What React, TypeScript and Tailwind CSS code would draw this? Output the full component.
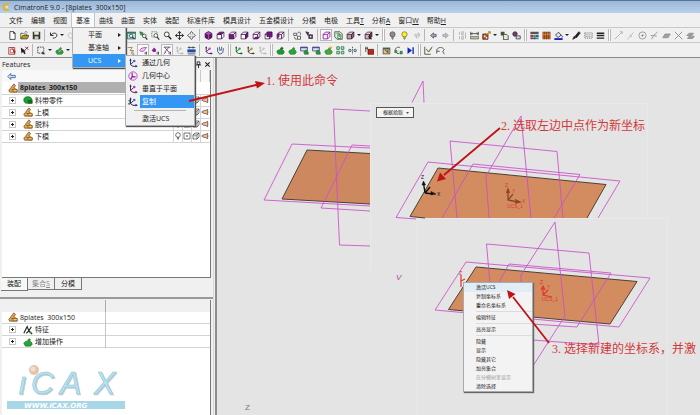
import React from 'react';

type Tool = { icon: string; label: string; pressed?: boolean } | 'sep' | 'grip' | 'caret';

const t = (icon: string, label: string, pressed = false): Tool => ({ icon, label, pressed });

const cube = (front: string, top: string, side: string) => (
  <>
    <path d="M1.5 4.5h6v6h-6z" fill={front} stroke="#3b1048" />
    <path d="M1.5 4.5l3-3h6l-3 3z" fill={top} stroke="#3b1048" />
    <path d="M7.5 4.5l3-3v6l-3 3z" fill={side} stroke="#3b1048" />
  </>
);

const plug = (color: string, extra?: React.ReactNode) => (
  <>
    <path d="M1 8c0-2 2-3 4-3l2-3 2 1-1 2c2 0 3 2 3 4l-2 2H3z" fill={color} stroke="#0b5a12" strokeWidth=".6" />
    {extra}
  </>
);

const axes = (a: string, b: string) => (
  <>
    <path d="M3 1v7l3 2h5M3 8l4-4" fill="none" stroke={a} strokeWidth="1.2" />
    <path d="M1.5 3L3 .5 4.500 3zM9 8l2.500 2L9 11.500z" fill={a} />
    <circle cx="7.500" cy="3.500" r="1.500" fill={b} />
  </>
);

const bulb = (fill: string, stroke: string) => (
  <>
    <circle cx="6" cy="4.500" r="3.500" fill={fill} stroke={stroke} />
    <path d="M4.500 8.500h3M4.500 10h3M5.500 11.300h1" stroke={stroke} />
  </>
);

const GLYPHS: Record<string, React.ReactNode> = {
  new: <path d="M2.500.8h5l2 2v8.400h-7zM7.300.8v2.400h2.200" fill="#fff" stroke="#222" />,
  open: (
    <>
      <path d="M1 10V3h3l1 1h4v2" fill="#fdf3a0" stroke="#444" />
      <path d="M1 10.500L3.500 6H12l-2.500 4.500z" fill="#b79b1e" stroke="#444" />
      <path d="M6 2c1-2 3-1 4 0" fill="none" stroke="#333" strokeWidth=".8" />
    </>
  ),
  save: (
    <>
      <path d="M1 1h10v10H1z" fill="#35392c" />
      <path d="M3 1h6v4H3z" fill="#e8e8dc" />
      <path d="M3.500 7h5v4h-5z" fill="#c9c9b8" />
    </>
  ),
  undo: <path d="M2 2v4h4M2.500 5.500c3-4 8-3 8 0 0 3-3 4-5 4H5" fill="none" stroke="#222" strokeWidth="1.200" />,
  redo: <path d="M10 2v4H6M9.500 5.500c-3-4-8-3-8 0 0 3 3 4 5 4" fill="none" stroke="#bbb" strokeWidth="1.200" />,
  zoomWindow: (
    <>
      <path d="M.5 1.500h11v9H.5z" fill="#bfe0d5" stroke="#1d5a52" />
      <path d="M.5 1.500h11v2H.5z" fill="#2b6f68" />
      <circle cx="5.500" cy="6.500" r="2.200" fill="#fff" stroke="#143c38" />
      <path d="M7 8l3 2.500" stroke="#143c38" strokeWidth="1.500" />
    </>
  ),
  zoomGreen: (
    <>
      <path d="M1 1l4 1 1 4-4-1z" fill="#3aa648" stroke="#145a20" strokeWidth=".7" />
      <circle cx="7" cy="6.500" r="2.500" fill="#e7f3e7" stroke="#333" />
      <path d="M8.500 8.500L11 11.500" stroke="#222" strokeWidth="1.500" />
    </>
  ),
  zoomBox: (
    <>
      <path d="M1 1h7v7H1z" fill="none" stroke="#2f7a39" strokeDasharray="1.500 1" />
      <circle cx="6.500" cy="6" r="2.500" fill="#fff" stroke="#333" />
      <path d="M8 8l3 3.500" stroke="#222" strokeWidth="1.500" />
    </>
  ),
  magnifier: (
    <>
      <circle cx="5" cy="4.500" r="3.200" fill="#f8f8f8" stroke="#333" strokeWidth="1.200" />
      <path d="M7.300 7L11 11" stroke="#222" strokeWidth="1.800" />
    </>
  ),
  move: <path d="M6 1v10M1 6h10M4 3l2-2.500L8 3M4 9l2 2.500L8 9M3 4L.5 6 3 8M9 4l2.500 2L9 8" fill="none" stroke="#222" strokeWidth="1.200" />,
  rotate: <path d="M4 3l2-2.300L8 3 7 4.500M4 9l2 2.300L8 9 7 7.500M3 4L.7 6 3 8l1.500-1M9 4l2.300 2L9 8 7.500 7M5 4.500L4 3M5 7.500L4 9" fill="none" stroke="#333" />,
  solid: (
    <>
      <path d="M6 .8l4.500 2.400v5.500L6 11.200 1.500 8.700V3.200z" fill="#6a0f72" stroke="#3b1048" />
      <path d="M2 3.400l4 2 4-2-4-2z" fill="#a85cae" />
      <path d="M6 5.500v5.300" stroke="#d9b8dc" strokeWidth=".6" />
    </>
  ),
  cubeTop: cube('#fff', '#7c1184', '#fff'),
  cubeFront: cube('#7c1184', '#fff', '#e9d2eb'),
  cubeSide: cube('#fff', '#fff', '#7c1184'),
  cubeBottom: (
    <>
      {cube('#fff', '#fff', '#f0e0f2')}
      <path d="M1.500 10.500l3-3h6l-3 3z" fill="#7c1184" />
    </>
  ),
  cubeBack: (
    <>
      {cube('#fff', '#fff', '#fff')}
      <path d="M4 1.500h6.500v6H4z" fill="#7c1184" stroke="#3b1048" />
    </>
  ),
  cubeWire: (
    <>
      {cube('#fff', '#fff', '#fff')}
      <path d="M1.500 4.500l3-3v6l-3 3z" fill="#7c1184" />
    </>
  ),
  cubePink: (
    <path d="M1.500 4.500h6v6h-6zM1.500 4.500l3-3h6l-3 3M10.500 1.500v6l-3 3" fill="#fbeffb" stroke="#8d1796" strokeWidth="1.100" />
  ),
  orbit: (
    <>
      <path d="M1 3h4v3H1zM6 7h4v4H6z" fill="#fff" stroke="#333" />
      <path d="M6 3c2-3 5-1 4 2M2 8c0 2 1 3 3 3" fill="none" stroke="#333" />
    </>
  ),
  transform: (
    <>
      <path d="M1 1l4 1-1 4zM5 5h5v5H5z" fill="#5a2a62" stroke="#222" strokeWidth=".8" />
      <path d="M6.500 6.500h2v2h-2z" fill="#fff" />
    </>
  ),
  boxGreen: (
    <>
      <path d="M1 1h7l3 3v7H4L1 8z" fill="#dfeadf" stroke="#234d2a" />
      <path d="M3 3h4v5M5 5v5h4V5z" fill="none" stroke="#2c7a3a" />
    </>
  ),
  shaded: cube('#b5a68d', '#ece5d8', '#857456'),
  shadedDark: (
    <>
      {cube('#c9b9a5', '#efe6dc', '#6c3d22')}
      <path d="M6 7l4 4" stroke="#222" strokeWidth="1.500" />
    </>
  ),
  bulbGray: bulb('#8c8c8c', '#5a5a5a'),
  bulbYellow: bulb('#fbef30', '#7c7320'),
  bulbsFaded: (
    <path d="M3 6a2 2 0 1 1 3 2v2M7 3a2 2 0 1 1 2 4v2" fill="#d0d0d0" stroke="#b2b2b2" />
  ),
  prev: <path d="M2 6l4-3.500v2h3.500v3H6v2z" fill="#a9a9b3" stroke="#4a4a60" />,
  next: <path d="M10 6L6 2.500v2H2.500v3H6v2z" fill="#b8b8b8" stroke="#a4a4a4" />,
  digits: <path d="M2 1v4M5 1h2v4H5zM2 7v4M5 7h2v4H5zM10 2v8" fill="none" stroke="#a5a5a5" />,
  measure: (
    <>
      <path d="M1 1v5M11 1v5M1 3.500h10M3 2L1.500 3.500 3 5M9 2l1.500 1.500L9 5" fill="none" stroke="#333" />
      <path d="M.5 7.500h11v3H.5z" fill="#c4cbb0" stroke="#555f45" />
    </>
  ),
  analyze: (
    <>
      <path d="M1 4h7v7H1z" fill="#b5532b" stroke="#4c2212" />
      <path d="M2.500 6h2v2h-2zM5 8h2v2H5z" fill="#fff" />
      <path d="M6 5l5-4M8 1h3v3" stroke="#b99222" strokeWidth="1.400" fill="none" />
    </>
  ),
  copyPart: (
    <>
      <path d="M1 1h5v5H1z" fill="#3b5a3a" />
      <path d="M4.500 4.500H9l2 2v5H4.500z" fill="#e6e6d8" stroke="#333" />
    </>
  ),
  linkPart: (
    <>
      <circle cx="4" cy="4" r="3" fill="#7b3a6d" stroke="#333" />
      <path d="M5.500 6.500h5.500v4H5.500z" fill="#dcdcdc" stroke="#333" />
    </>
  ),
  palette: (
    <>
      <path d="M.5 1h11v3H.5z" fill="#555" />
      <path d="M.5 5h3.500v3H.5z" fill="#c22a33" />
      <path d="M4.300 5h3.500v3H4.300z" fill="#2f9a45" />
      <path d="M8 5h3.500v3H8z" fill="#3159ba" />
      <path d="M.5 8.500h3.500v2.500H.5z" fill="#892c9a" />
      <path d="M4.300 8.500h3.500v2.500H4.300z" fill="#444" />
      <path d="M8 8.500h3.500v2.500H8z" fill="#23a2a2" />
    </>
  ),
  texture: (
    <>
      <path d="M.5 1h11v10H.5z" fill="#b9662f" />
      <path d="M3 1v10M6 1v10M9 1v10" stroke="#6b3313" />
      <path d="M1 4c3 2 6-1 10 1" fill="none" stroke="#d9a066" />
    </>
  ),
  fill: (
    <>
      <path d="M2 5.500L6 1.500l3.500 4-4 3.200z" fill="#dfe6ee" stroke="#222" />
      <path d="M9.500 5.500c2 1 2 3 1 3" stroke="#1c36b8" strokeWidth="1.300" fill="none" />
      <path d="M.5 9.500h11V12H.5z" fill="#1723c0" />
    </>
  ),
  brush: <path d="M1 11l2-4 2 2zM4 7l5-6 2 1.500L6 9z" fill="#222" stroke="#222" />,
  dotted: <path d="M1 2.500h10v7H1zM2 5h8M2 7.500h8" fill="none" stroke="#666" strokeDasharray="1.500 1" />,
  lines: <path d="M1 3h10M1 6h10M1 9.500h10" stroke="#222" strokeWidth="1.800" />,
  gLine: <path d="M1 11L10 2M8 1h3v3" fill="none" stroke="#a0a0a0" />,
  gLineMid: <path d="M2 11L10 2M5 5l3 3" fill="none" stroke="#a8a8a8" />,
  gCircle: (
    <>
      <circle cx="6" cy="6" r="4.800" fill="none" stroke="#8a8a8a" />
      <circle cx="6" cy="6" r="1.300" fill="#777" />
    </>
  ),
  gAngle: <path d="M1 6h4l5-5M5 6l-3 5M5 6l4 1" fill="none" stroke="#999" strokeWidth="1.300" />,
  gPlane: <path d="M1 9l3-5h7L8 9z" fill="#a0a0a0" stroke="#8a8a8a" />,
  gCross: <path d="M1 1l10 10M11 1L1 11" stroke="#8a8a8a" strokeWidth="1.200" />,
  gPlanes: <path d="M1 6l3-3h6L8 6zM2 10l2-3h7l-2 3z" fill="#a0a0a0" stroke="#8a8a8a" />,
  pickBox: (
    <>
      <path d="M1 2h8v9H1z" fill="#fff" stroke="#8c1d1d" />
      <path d="M3 4h5v5H3z" fill="none" stroke="#c43232" />
      <path d="M5 3l5 5-2 .5 1 2.500" fill="#b32020" stroke="#7c1111" strokeWidth=".6" />
    </>
  ),
  pickClear: (
    <>
      <path d="M1 2l1 8 2-2 2 3 1.500-1L6 7h2z" fill="#222" />
      <path d="M7 1l4 4M11 1L7 5" stroke="#a31f1f" strokeWidth="1.300" />
    </>
  ),
  selectBox: (
    <>
      <path d="M1 1.500h8v8H1z" fill="none" stroke="#222" strokeDasharray="2 1" />
      <path d="M7 7l4 4H7z" fill="#222" />
    </>
  ),
  plug: plug('#25a53a'),
  plugMini: plug('#3c9a44', <path d="M5 8l5-5" stroke="#fff" strokeWidth=".8" />),
  plugYellow: plug('#45a83a', <path d="M6 1h5v2H7z" fill="#d8b52d" />),
  plugTall: plug('#1f9732', <path d="M8 1v4M6 3h4" stroke="#115b1c" />),
  dialogGreen: (
    <>
      <path d="M.8 1.500h9v5h-9z" fill="#dbe7f5" stroke="#352a76" />
      <path d="M.8 1.500h9v1.500h-9z" fill="#4a3ca0" />
      <path d="M5 8l3-3 3 3v3H6z" fill="#27983a" stroke="#14521e" strokeWidth=".6" />
    </>
  ),
  grid4: (
    <path d="M1 1h3.500v3.500H1zM7 1h3.500v3.500H7zM1 7h3.500v3.500H1zM7 7h3.500v3.500H7z" fill="#b9e2c2" stroke="#1e6d42" />
  ),
  mirror: (
    <>
      <path d="M6 1v10" stroke="#333" strokeDasharray="2 1" />
      <circle cx="2.500" cy="6" r="1.700" fill="#a7cbd6" stroke="#1f5466" />
      <circle cx="9.500" cy="6" r="1.700" fill="#a7cbd6" stroke="#1f5466" />
    </>
  ),
  deletePart: (
    <>
      <path d="M1 1v7M0 3h4M3 1v4" stroke="#333" />
      <path d="M4 4.500h7.500v6.500H4z" fill="#bf2718" stroke="#5f130b" />
    </>
  ),
  boxOpen: (
    <>
      <path d="M1 2h10v2H1z" fill="#2f7d82" />
      <path d="M1.500 4h9v6.500h-9z" fill="#e7c08e" stroke="#5b3a1a" />
      <path d="M4 5l4 4M8 5v4" stroke="#286c3a" strokeWidth="1.400" />
    </>
  ),
  swap: (
    <>
      <path d="M1.500 6c0-4 4-5 6.500-4M4 10h3" stroke="#333" fill="none" />
      <path d="M1 6h3v3H1zM8 7h3v3.500H8z" fill="#3ba552" stroke="#19592a" strokeWidth=".7" />
    </>
  ),
  playEnd: (
    <>
      <path d="M2 1.500L8 6l-6 4.500z" fill="#1029c4" />
      <path d="M9.500 1.500v9" stroke="#1029c4" strokeWidth="1.800" />
    </>
  ),
  sketch: (
    <>
      <path d="M1 1v10h8M3 4l3 4 5-7" fill="none" stroke="#333" />
      <path d="M6 8l4-5" stroke="#9b7b3b" strokeWidth="1.500" />
    </>
  ),
  curve: <path d="M1 10V5c2-4 8-4 10 0l-2 2 2 4M1 7h4" fill="none" stroke="#444" strokeWidth="1.100" />,
  axesGreen: axes('#175e2a', '#2ca043'),
  axesBrown: axes('#4f3b22', '#b68a3a'),
  axesFaded: axes('#b5b5b5', '#c2c2c2'),
  axesPurple: axes('#5a2462', '#a13fb0'),
  axesBlue: axes('#24377d', '#4667b8'),
  axesCopy: (
    <>
      {axes('#24305d', '#4667b8')}
      <path d="M.5 4.500h2v2l-2 2h2" fill="none" stroke="#222" />
    </>
  ),
  letterA: <path d="M1 2h6l-3 4h5M8 11c-3 0-3-4 0-4v4h2" fill="none" stroke="#8b7a30" />,
  pinkNode: (
    <>
      <path d="M1 6c1-3 4-4 9-4l-4 5H2z" fill="#f4cdf6" stroke="#9d2da8" />
      <path d="M10 11c-3 0-3-3 0-3v3" fill="none" stroke="#333" />
    </>
  ),
  purpleDrop: (
    <>
      <path d="M1 6l3-4 3 3-1 3H3z" fill="#8c2196" />
      <path d="M10 11c-3 0-3-3 0-3v3" fill="none" stroke="#333" />
    </>
  ),
  dimension: <path d="M1 1.500h9M2 1.500l6 7M2 8.500l6-7M1 11l3-3M10 11c-3 0-3-3 0-3v3" fill="none" stroke="#4c2e58" />,
  blueBar: (
    <>
      <path d="M.5 4.500h11v4H.5z" fill="#1e48b8" />
      <path d="M1 2h10M3 .5v3M8 .5v3M1 10.500h10" fill="none" stroke="#333" />
    </>
  ),
  hand: (
    <>
      <path d="M2 2v5l3 4 4-2 1-6M4.500 1v5M7.500 1v5" fill="none" stroke="#4d5878" strokeWidth="1.200" />
      <circle cx="6" cy="5" r="1.500" fill="#7b93cf" />
    </>
  ),
  assembly: (
    <>
      <path d="M1 9l6-8 2 2-2 3 4 2v3H2z" fill="#e3a351" stroke="#6a3d10" strokeWidth=".8" />
      <path d="M4 7.500l4 1" stroke="#6a3d10" strokeWidth=".8" />
      <path d="M6 8h5v2.500H6z" fill="#f5dc7a" stroke="#6a3d10" strokeWidth=".7" />
    </>
  ),
  strip: (
    <>
      <path d="M1 6c0-3 2-4 5-4s5 2 5 5v3H5C2 10 1 8 1 6z" fill="#18a12c" stroke="#0c5c18" strokeWidth=".8" />
      <path d="M6 6h5v4H6z" fill="#0d6a1d" />
    </>
  ),
  feature: (
    <>
      <path d="M1 10l4-8 2 5 3-5M4 10l3-3 4 4" fill="none" stroke="#222" strokeWidth="1.300" />
      <circle cx="9" cy="9" r="1.300" fill="#2f8a3b" />
    </>
  ),
  circleAxis: (
    <>
      <circle cx="6" cy="6" r="5" fill="#fbeafc" stroke="#b33bc0" />
      <path d="M5 2v5h4M5 7l-2 3" stroke="#6b1d86" strokeWidth="1.300" fill="none" />
    </>
  ),
  point: (
    <>
      <path d="M1.500 1.500h9v9h-9z" fill="#fff" stroke="#333" />
      <path d="M5 5h2v2H5z" fill="#333" />
    </>
  ),
  wire: <path d="M1.500 4.500h6v6h-6zM1.500 4.500l3-3h6l-3 3M10.500 1.500v6l-3 3M4 7h1" fill="#fff" stroke="#333" />,
  speaker: <path d="M1 6l3-2h2l4-2v8L6 8H4zM10 6h1" fill="#e8c2a8" stroke="#5a2f18" />,
  smallBulb: bulb('#fff', '#333'),
  back: <path d="M1 6l4-4v2.500h6v3H5V10z" fill="#cfe3f7" stroke="#1b5590" />,
};

const Glyph = ({ name, className = 'size-2.5' }: { name: string; className?: string }) => (
  <svg viewBox="0 0 12 12" className={`${className} shrink-0`} aria-hidden="true">
    {GLYPHS[name]}
  </svg>
);

const MENUS: [string, string?][] = [
  ['文件'], ['编辑'], ['视图'], ['基准'], ['曲线'], ['曲面'], ['实体'], ['装配'], ['标准件库'], ['模具设计'],
  ['五金模设计'], ['分模'], ['电极'], ['工具', 'T'], ['分析', 'A'], ['窗口', 'W'], ['帮助', 'H'],
];

const STANDARD_TOOLS: Tool[] = [
  t('new', '新建'), t('open', '打开'), t('save', '保存'), 'sep',
  t('undo', '撤销'), 'caret', t('redo', '重做'), 'caret', 'grip',
  t('zoomBox', '缩放'), t('zoomGreen', '缩放选择'), t('magnifier', '缩放'),
  t('zoomWindow', '窗口缩放'), t('zoomGreen', '缩放至所选'), t('zoomBox', '框选缩放'), t('magnifier', '动态缩放'), t('move', '平移'), t('rotate', '旋转'), 'sep',
  t('solid', '等轴测'), t('cubeTop', '俯视'), t('cubeFront', '前视'), t('cubeSide', '右视'), t('cubeBottom', '仰视'), t('cubeBack', '后视'), t('cubeWire', '左视'), 'sep',
  t('orbit', '旋转视图'), t('transform', '转换视图'), 'sep',
  t('cubePink', '线框', true), t('boxGreen', '隐藏线'), t('shaded', '着色'), 'caret', t('shadedDark', '渲染'), 'caret', 'grip',
  t('bulbGray', '隐藏'), t('bulbYellow', '显示'), t('bulbsFaded', '切换显示'), 'sep',
  t('prev', '上一个'), t('next', '下一个'), 'sep',
  t('digits', '编号'), t('measure', '测量'), t('analyze', '分析'), 'caret', t('copyPart', '复制零件'), t('linkPart', '链接零件'), 'grip',
  t('palette', '调色板'), t('texture', '纹理'), t('fill', '填充'), 'caret', t('brush', '格式刷'), t('dotted', '线型'), t('lines', '线宽'), 'grip',
  t('gLine', '直线'), t('gLineMid', '中点'), t('gCircle', '圆心'), t('gAngle', '角度'), t('gPlane', '平面'), t('gCross', '交点'), t('gPlanes', '平行面'),
];

const PART_TOOLS: Tool[] = [
  t('pickBox', '选择'), t('pickClear', '取消选择'), 'sep',
  t('selectBox', '框选'), 'caret', t('plugMini', '过滤'), 'caret', 'grip',
  t('axesBlue', '坐标系'), t('axesGreen', '坐标'), t('axesBrown', '轴'), t('axesPurple', '平面'),
  t('letterA', '注释'), t('pinkNode', '草图点', true), t('purpleDrop', '曲线点'), t('dimension', '尺寸', true), t('axesFaded', '约束'), t('blueBar', '标尺'), 'sep',
  t('axesPurple', '基准'), t('hand', '拖动'), 'grip',
  t('axesGreen', '放置'), t('axesBrown', '定位'), t('axesFaded', '固定'), 'grip',
  t('plugTall', '添加零件'), t('plug', '连接零件'), t('dialogGreen', '新零件'), t('dialogGreen', '新组件'), t('plugYellow', '编辑零件'), t('grid4', '阵列'), t('mirror', '镜像'), 'sep',
  t('deletePart', '删除零件'), 'sep',
  t('boxOpen', '打开零件'), t('swap', '替换'), t('playEnd', '激活'), 'grip',
  t('sketch', '草图'), t('curve', '曲线'),
];

const Toolbar = ({ tools, label }: { tools: Tool[]; label: string }) => (
  <div role="toolbar" aria-label={label} className="flex h-[15px] items-center overflow-hidden border-t border-[#c9c9c9] pl-1.5">
    {tools.map((tool, i) => {
      if (tool === 'sep') return <span key={i} className="mr-0.5 ml-0.5 h-3 w-px shrink-0 bg-[#b5b5b5]" />;
      if (tool === 'grip') return <span key={i} className="mr-px ml-0.5 h-3 w-[3px] shrink-0 border-x border-[#b9b9b9] bg-white" />;
      if (tool === 'caret') {
        return (
          <span key={i} className="flex w-1.5 shrink-0 justify-center">
            <svg viewBox="0 0 4 2" className="h-0.5 w-1"><path d="M0 0h4L2 2z" fill="#222" /></svg>
          </span>
        );
      }
      return (
        <button
          key={i}
          type="button"
          aria-label={tool.label}
          className={tool.pressed
            ? 'flex h-3 w-3 shrink-0 items-center justify-center border border-[#b8b8b8] bg-[#fafafa]'
            : 'flex h-3 w-3 shrink-0 items-center justify-center'}
        >
          <Glyph name={tool.icon} className="size-[9px]" />
        </button>
      );
    })}
  </div>
);

const UCS_ITEMS = [
  { icon: 'axesBlue', text: '通过几何' },
  { icon: 'circleAxis', text: '几何中心' },
  { icon: 'axesPurple', text: '垂直于平面' },
  { icon: 'axesCopy', text: '复制', active: true },
];

const DatumMenu = () => (
  <div className="absolute top-full left-0 z-20 w-[54px] border border-[#b0b0b0] bg-[#f1f1f1] shadow-[1px_1px_1px_#555]">
    {['平面', '基准轴', 'UCS'].map((text) => (
      <button
        key={text}
        type="button"
        className={text === 'UCS'
          ? 'flex h-[13px] w-full items-center bg-[#3397f3] pr-1 pl-[15px] text-white'
          : 'flex h-[13px] w-full items-center pr-1 pl-[15px]'}
      >
        <span className="flex-1 text-left">{text}</span>
        <svg viewBox="0 0 3 4" className="h-1 w-[3px]"><path d="M0 0v4l3-2z" fill="currentColor" /></svg>
      </button>
    ))}
    <div className="absolute top-[27px] left-[52px] w-[70px] border border-[#b0b0b0] bg-[#f1f1f1] shadow-[1px_1px_1px_#555]">
      {UCS_ITEMS.map(({ icon, text, active }) => (
        <button
          key={text}
          type="button"
          className="flex h-[13px] w-full items-center pl-0.5"
        >
          <Glyph name={icon} />
          <span className={active
            ? 'ml-0.5 flex h-full flex-1 items-center bg-[#3397f3] pl-0.5 text-white'
            : 'ml-0.5 flex h-full flex-1 items-center pl-0.5'}
          >
            {text}
          </span>
        </button>
      ))}
      <hr className="mt-0.5 mr-2 ml-2 border-[#b5b5b5]" />
      <button type="button" className="flex h-3.5 w-full items-center pl-4">激活UCS</button>
    </div>
  </div>
);

const MenuBar = () => (
  <nav className="flex h-3.5 shrink-0 items-center pl-[5px]">
    {MENUS.map(([text, key]) => (
      <div key={text} className={text === '基准' ? 'relative h-full border-x border-[#c4c4c4] bg-[#fafafa]' : 'h-full'}>
        <button type="button" className="h-full px-1 whitespace-nowrap">
          {text}{key && <u>{key}</u>}
        </button>
        {text === '基准' && <DatumMenu />}
      </div>
    ))}
  </nav>
);

const Expander = () => (
  <button type="button" aria-label="展开" className="flex size-[7px] items-center justify-center border border-[#c8c8c8] bg-white">
    <svg viewBox="0 0 5 5" className="size-[5px]"><path d="M1 2.500h3M2.500 1v3" stroke="#222" /></svg>
  </button>
);

const PARTS = [
  { icon: 'strip', name: '料带零件' },
  { icon: 'assembly', name: '上模' },
  { icon: 'assembly', name: '脱料' },
  { icon: 'assembly', name: '下模' },
];

const FeatureTree = () => (
  <div className="mx-0.5 min-h-0 flex-[208] overflow-hidden border-r border-b border-[#777] bg-white">
    <table className="w-full table-fixed border-collapse">
      <colgroup>
        <col />
        <col className="w-[9px]" />
        <col className="w-[9px]" />
        <col className="w-[9px]" />
        <col className="w-[9px]" />
      </colgroup>
      <thead>
        <tr className="h-3 bg-[#f8f8f8]">
          <th className="border-r border-[#c9c9c9] p-0 pl-[5px]"><Glyph name="back" className="size-[9px]" /></th>
          {[1, 2, 3, 4].map((n) => <th key={n} className="border-r border-[#c9c9c9] p-0" />)}
        </tr>
      </thead>
      <tbody>
        <tr className="h-3 border-b border-[#d4d4d4]">
          <td className="p-0">
            <div className="flex items-center pl-1.5">
              <Glyph name="assembly" />
              <span className="h-[11px] flex-1 bg-[#b0b0b0] pl-0.5 leading-[11px] font-bold whitespace-pre">8plates  300x150</span>
            </div>
          </td>
          <td colSpan={4} className="border-l border-[#d4d4d4] p-0" />
        </tr>
        {PARTS.map(({ icon, name }) => (
          <tr key={name} className="h-3 border-b border-[#d4d4d4]">
            <td className="p-0">
              <div className="flex items-center pl-[7px]">
                <Expander />
                <Glyph name={icon} className="mr-0.5 ml-[7px] size-2.5" />
                <span>{name}</span>
              </div>
            </td>
            {['smallBulb', 'point', 'wire', 'speaker'].map((g) => (
              <td key={g} className="border-l border-[#d4d4d4] p-0"><Glyph name={g} className="size-2" /></td>
            ))}
          </tr>
        ))}
      </tbody>
    </table>
  </div>
);

const Watermark = () => (
  <svg viewBox="0 0 122 46" className="mt-[17px] ml-1 h-[46px] w-[122px]">
    <g fontFamily="Liberation Sans, sans-serif" fontStyle="italic" fill="#b5e0ef" stroke="#93c3d8" strokeWidth=".5" fontSize="32" className="drop-shadow-[1px_1px_0_#c4cdd0]">
      <text x="12" y="29">ı</text>
      <text x="25" y="29">C</text>
      <text x="54" y="29">A</text>
      <text x="88" y="29">X</text>
    </g>
    <circle cx="28" cy="5" r="5" fill="#e5c3a8" />
    <circle cx="27" cy="4" r="2.500" fill="#f4dfcc" />
    <path d="M1 36h118v8H1z" fill="#a7d6e7" />
    <text x="18" y="43" fontFamily="DejaVu Sans, sans-serif" fontStyle="italic" fontSize="7" fontWeight="bold" fill="#fff">WWW.iCAX.ORG</text>
  </svg>
);

const PartTree = () => (
  <div className="mx-0.5 mt-px min-h-0 flex-[116] overflow-hidden border-r border-[#777] bg-white">
    <table className="w-full table-fixed border-collapse">
      <colgroup>
        <col className="w-[103px]" />
        <col />
      </colgroup>
      <thead>
        <tr className="h-3 bg-[#f0f0f0]">
          <th className="border-r border-[#aaa] p-0" />
          <th className="p-0" />
        </tr>
      </thead>
      <tbody>
        <tr className="h-3 border-b border-[#d4d4d4]">
          <td className="border-r border-[#c4c4c4] p-0">
            <div className="flex items-center pl-1.5">
              <Glyph name="assembly" />
              <span className="pl-0.5 leading-[11px] whitespace-pre">8plates  300x150</span>
            </div>
          </td>
          <td />
        </tr>
        {[['feature', '特征'], ['plug', '增加操作']].map(([icon, name]) => (
          <tr key={name} className="h-3 border-b border-[#d4d4d4]">
            <td className="border-r border-[#c4c4c4] p-0">
              <div className="flex items-center pl-[7px]">
                <Expander />
                <Glyph name={icon} className="mr-0.5 ml-[7px] size-2.5" />
                <span>{name}</span>
              </div>
            </td>
            <td />
          </tr>
        ))}
      </tbody>
    </table>
    <Watermark />
  </div>
);

const SidePanel = () => (
  <aside className="flex w-[213px] shrink-0 flex-col">
    <header className="flex h-3 shrink-0 items-center gap-0.5 pr-0.5 pl-0.5">
      <h2 className="flex-1">Features</h2>
      <button type="button" aria-label="固定">
        <svg viewBox="0 0 8 8" className="size-[7px]"><path d="M2.500 1h3v3h-3zM1 4.500h6M4 4.500V8" fill="none" stroke="#222" /></svg>
      </button>
      <button type="button" aria-label="关闭">
        <svg viewBox="0 0 8 8" className="size-[7px]"><path d="M1.500 1.500l5 5M6.500 1.500l-5 5" stroke="#222" strokeWidth="1.300" /></svg>
      </button>
    </header>
    <FeatureTree />
    <div role="tablist" className="flex h-[13px] shrink-0 pl-px">
      <button type="button" role="tab" aria-selected="true" className="h-full w-[27px] border-r border-b border-[#777] bg-[#f7f7f7]">装配</button>
      <button type="button" role="tab" aria-selected="false" className="h-3 w-[27px] border-r border-b border-[#777] text-[#888]">集合<u>S</u></button>
      <button type="button" role="tab" aria-selected="false" className="h-3 w-[27px] border-r border-b border-[#777]">分模</button>
    </div>
    <div className="mt-1 h-1 shrink-0 border-b-2 border-[#999]" />
    <PartTree />
  </aside>
);

const CONTEXT_ITEMS = [
  '激活UCS', '复制坐标系', '重命名坐标系', '-', '编辑特征', '-', '高亮显示', '-',
  '隐藏', '显示', '隐藏其它', '加亮集合', '在分模树里显示', '清除选择',
];

const ContextMenu = () => (
  <div role="menu" className="absolute top-[224px] left-[246px] w-[70px] border border-[#aaa] bg-[#f3f3f3] text-[5px] shadow-[1px_1px_1px_#666]">
    {CONTEXT_ITEMS.map((text, i) => {
      if (text === '-') return <hr key={i} className="my-px ml-3 border-[#dcdcdc]" />;
      let look = 'flex h-[9px] w-full items-center pl-3';
      if (i === 0) look += ' bg-[#e0edf6]';
      if (text === '在分模树里显示') look += ' text-[#999]';
      return <button key={i} type="button" role="menuitem" className={look}>{text}</button>;
    })}
  </div>
);

// World coordinates of the model view start at (217, 58)
const Model = () => (
  <svg viewBox="217 58 483 357" className="h-[357px] w-[483px]" fill="none" fontFamily="Liberation Sans, sans-serif">
    <g stroke="#e9e9e9">
      <path d="M370.500 103.500V270M370 103.500h278M647.500 103v115M418 218.500h250M417.500 218v197M667.500 218v197" />
    </g>

    <path d="M307 150l63 3.500V204l-88-5z" fill="#cd8860" />
    <path d="M370 153.500L307 150l-25 49 88 5" stroke="#4c4036" />
    <g stroke="#c94fca" strokeOpacity=".85">
      <path d="M370 148l-78-4-28 56 106 6" />
      <path d="M370 111l-36.500-2 6 136 30.500 1" />
      <path d="M370 146l-18-1-31 63 49 3" />
      <path d="M412 102.500L423 81l1 21.500" />
    </g>

    <path d="M425 218l-15-1.500L438 168l168 16.500L587 218z" fill="#d38b60" />
    <path d="M425 218l-15-1.500L438 168l168 16.500L587 218" stroke="#4c4036" />
    <g stroke="#c94fca" strokeOpacity=".85">
      <path d="M416 219l-20-1.500L428 162l192 19-22 37" />
      <path d="M457 218l-7-77 107 10.500 6 66.500" />
      <path d="M442 218l31-54 107 10.500L554 218" />
      <path d="M489 218l-3-42 35-60 10 102" />
    </g>
    <g stroke="#111" strokeWidth="1.400">
      <path d="M425 193l-1.500-10M425 193l8 1M425 193l5-6" />
      <path d="M422 185l1.500-4 2 4zM431 191.500l5 2.500-5 1z" fill="#111" strokeWidth=".5" />
    </g>
    <g fill="#111" fontSize="5">
      <text x="421" y="179">Z</text>
      <text x="437" y="196">X</text>
    </g>
    <path d="M508 190v10l10 2M508 200l5-6M506.500 193l1.500-4 1.500 4M515 199.500l5 2.500-5 1" stroke="#8f4424" strokeWidth="1.300" />
    <g fill="#d8412e" fontSize="5">
      <text x="505" y="187">Z</text>
      <text x="512" y="193">Y</text>
      <text x="522" y="203">X</text>
      <text x="507" y="208">UCS_1</text>
    </g>

    <path d="M476 267l161 14.500L610 324l-161.500-14.500z" fill="#d38b60" stroke="#4c4036" />
    <g stroke="#c94fca" strokeOpacity=".85">
      <path d="M466 262l184 16-31 49-184-17z" />
      <path d="M498 284l11-20 102 9-34 54-60-4" />
      <path d="M490 284l-3.500-40 102.500 9 10 92-80-6" />
      <path d="M521 284v-9l34-53 10 94-34 53" />
    </g>
    <path d="M461 275v12M461 281l4-2M543 288v7l9 2M543 295l5-5M541 290l2-4 2 4" stroke="#e0372a" strokeWidth="1.200" />
    <g fill="#e0372a" fontSize="5">
      <text x="459" y="275">Z</text>
      <text x="540" y="284">Z</text>
      <text x="547" y="289">Y</text>
      <text x="542" y="301">UCS_1</text>
    </g>
    <text x="396" y="280" fontSize="8" fontStyle="italic" fill="#b932b0">V</text>
    <text x="245" y="410" fontSize="8" fill="#777">Z</text>
  </svg>
);

const Viewport = () => (
  <main className="relative min-w-0 flex-1 overflow-hidden bg-[#e4e4e4]">
    <Model />
    <button type="button" className="absolute top-[49px] left-[159px] flex h-[11px] w-[38px] items-center justify-between border border-[#555] bg-[#f4f4f4] pr-1 pl-1.5 text-[5px]">
      根据拾取
      <svg viewBox="0 0 4 2" className="h-0.5 w-[3px]"><path d="M0 0h4L2 2z" fill="#222" /></svg>
    </button>
    <ContextMenu />
    <div className="font-['Liberation_Serif','Noto_Sans_CJK_SC',serif] text-xs leading-4 whitespace-nowrap text-[#d2383a]">
      <p className="absolute top-[15px] left-[49px]">1. 使用此命令</p>
      <p className="absolute top-[60px] left-[284px]">2. 选取左边中点作为新坐标</p>
      <p className="absolute top-[283px] left-[335px]">3. 选择新建的坐标系，并激</p>
    </div>
  </main>
);

const Arrows = () => (
  <svg viewBox="0 0 700 415" className="pointer-events-none absolute top-0 left-0 z-30 h-[415px] w-[700px]" aria-hidden="true">
    <g stroke="#c01318" strokeWidth="1.800">
      <path d="M189 101L258 84.500M500 128L444 175M549 343L513 297" />
    </g>
    <path d="M265 83l-8 5.500-2-7.500zM437 181.500l3-9 6 6.500zM507 290l8.500 4-6.500 5z" fill="#c01318" />
  </svg>
);

const App: React.FC = () => (
  <div className="relative flex h-screen min-h-[415px] flex-col overflow-hidden bg-[#f0f0f0] font-['Open_Sans','Noto_Sans_CJK_SC',sans-serif] text-[7px] leading-none text-[#222]">
    <header className="flex h-[13px] shrink-0 items-center gap-1 border-t border-[#5c7390] bg-linear-to-b from-[#9ab8da] to-[#b9d0e9] pl-0.5">
      <svg viewBox="0 0 10 10" className="size-2">
        <path d="M8.500 2A4 4 0 1 0 8.500 8" fill="none" stroke="#e6b421" strokeWidth="2.500" />
        <circle cx="6" cy="5" r="1.500" fill="#f4e7a0" />
      </svg>
      <h1 className="whitespace-pre">CimatronE 9.0 - [8plates  300x150]</h1>
    </header>
    <MenuBar />
    <Toolbar tools={STANDARD_TOOLS} label="标准" />
    <Toolbar tools={PART_TOOLS} label="零件" />
    <div className="flex min-h-0 flex-1 border-t border-[#8a8a8a]">
      <SidePanel />
      <div className="w-1 shrink-0 border-r-2 border-l border-r-[#8d8d8d] border-l-[#d8d8d8]" />
      <Viewport />
    </div>
    <Arrows />
  </div>
);

export default App;
